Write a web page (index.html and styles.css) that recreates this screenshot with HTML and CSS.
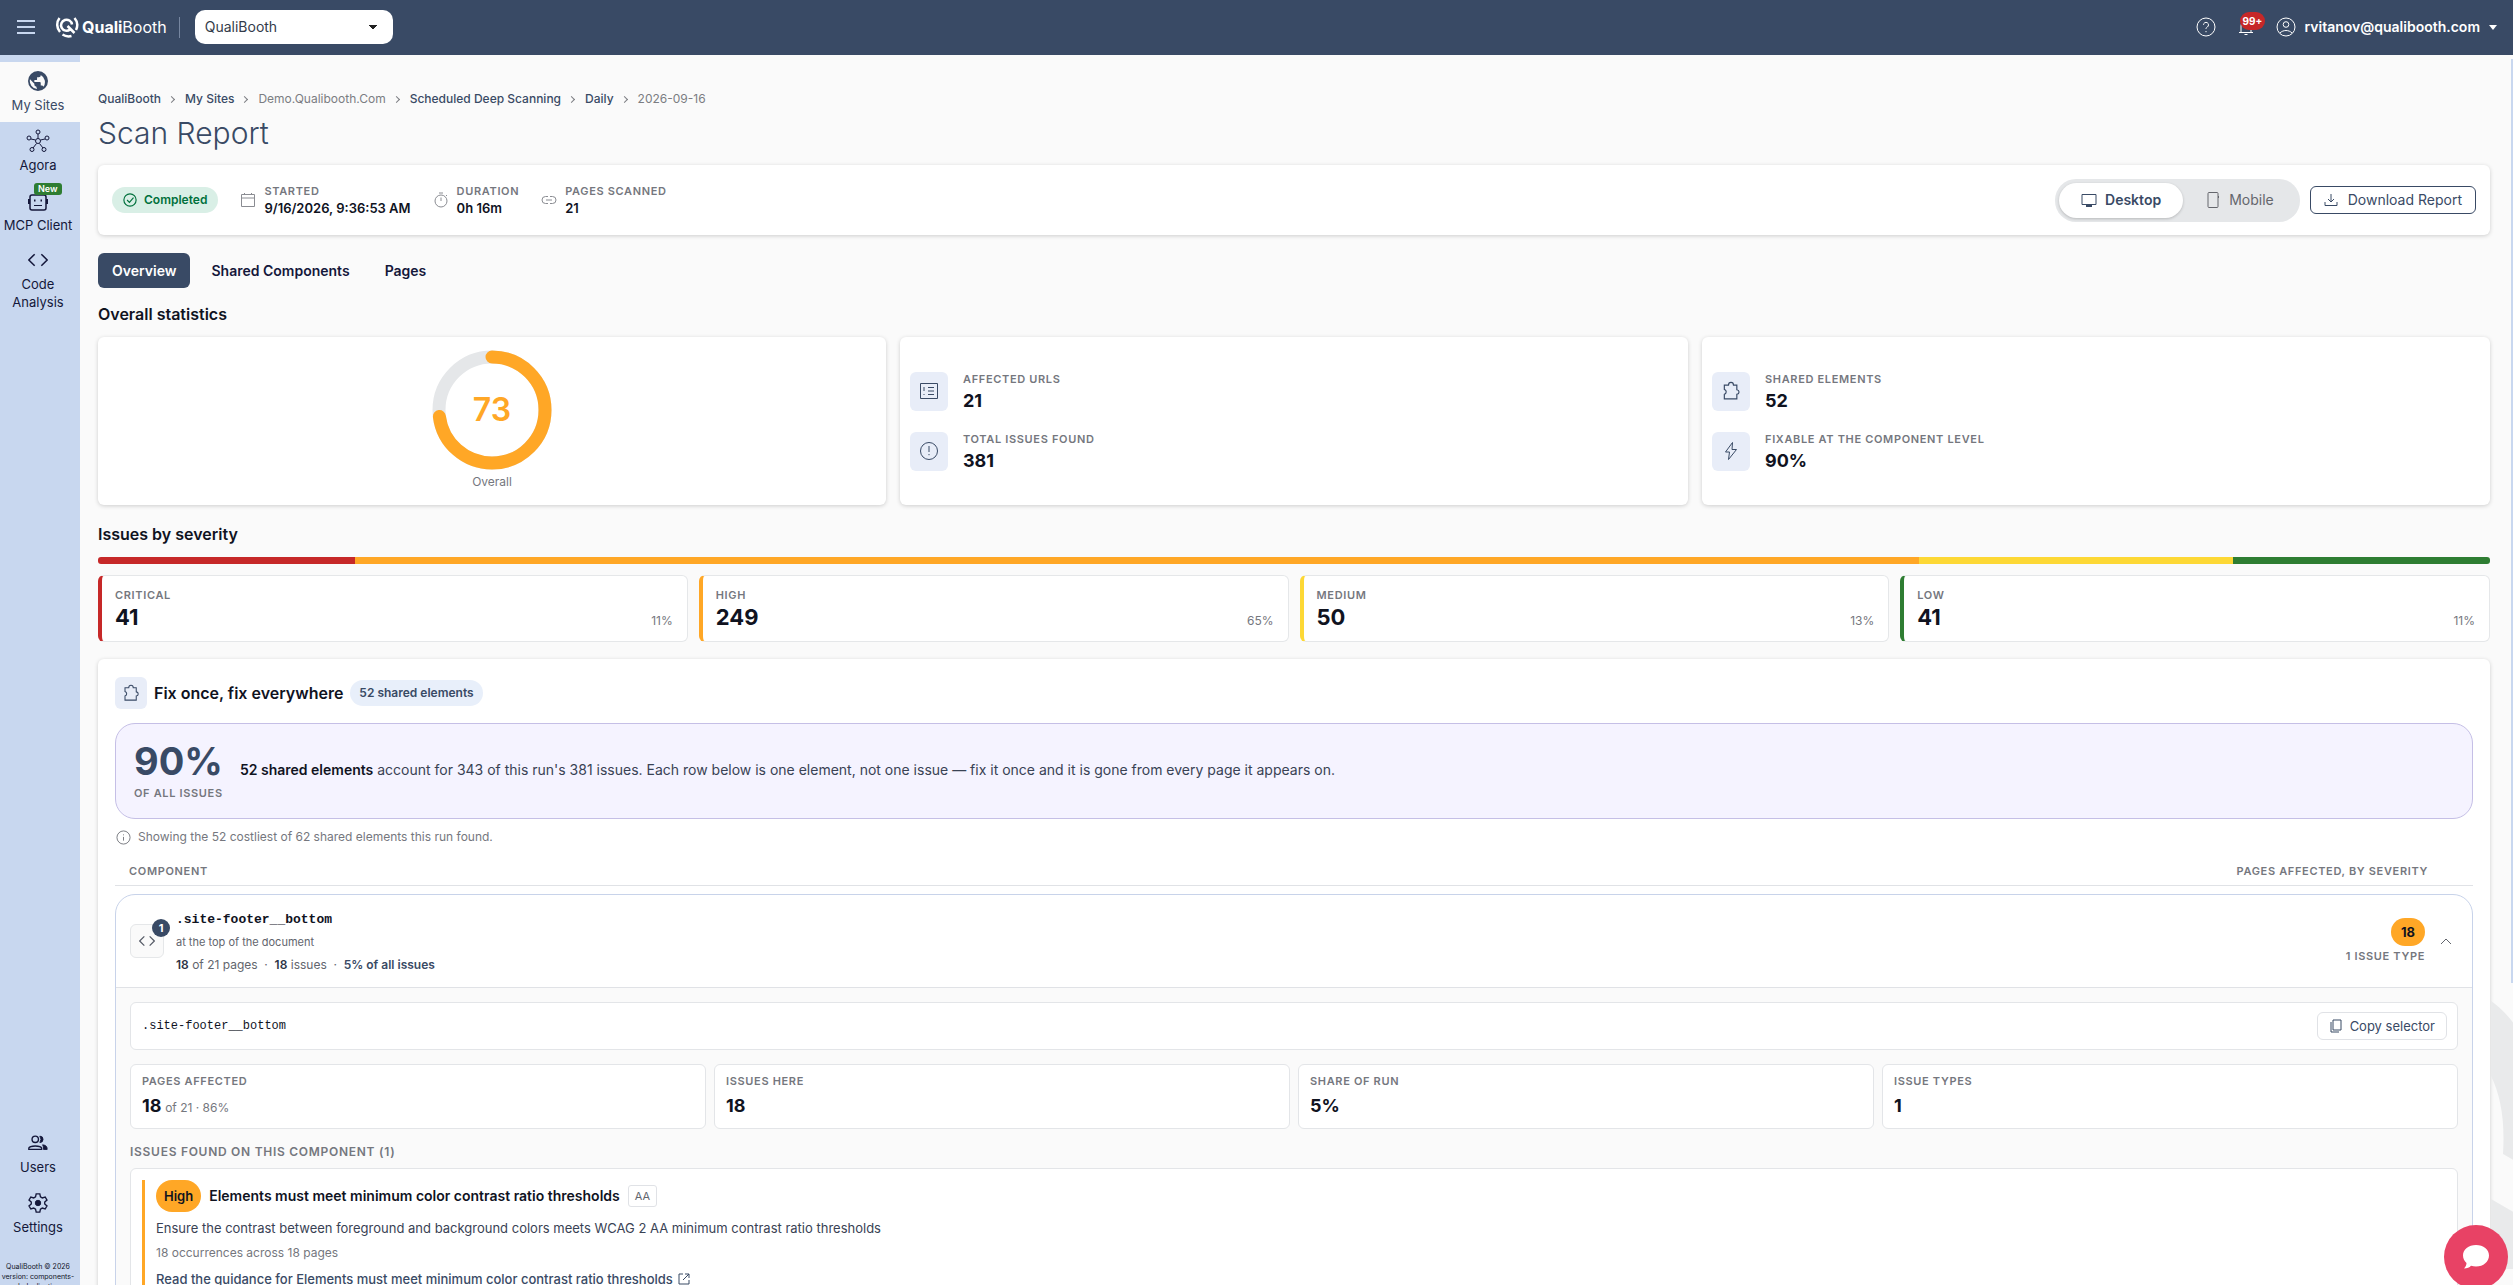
FILE: index.html
```
<!DOCTYPE html>
<html lang="en">
<head>
  <meta charset="UTF-8" />
  <meta name="viewport" content="width=device-width, initial-scale=1.0"/>
  <title>Scan Report - QualiBooth</title>
  <link rel="stylesheet" href="styles.css">
</head>
<body>

  <!-- shared icon shapes -->
  <svg class="sprite" aria-hidden="true">
    <symbol id="i-puzzle" viewBox="0 0 24 24"><path stroke-width="1.400" d="M4 5h5c0-4.500 6-4.500 6 0h4v5.500c3.500.5 3.500 5 0 5.500v5.500H4V16c3-1 3-5 0-6z"/></symbol>
    <symbol id="i-code" viewBox="0 0 24 24"><path stroke-width="1.800" d="M8 5l-7 7 7 7M16 5l7 7-7 7"/></symbol>
    <symbol id="i-info" viewBox="0 0 24 24"><circle cx="12" cy="12" r="10.500" stroke-width="1.500"/><path stroke-width="1.500" d="M12 11v6M12 7v1.500"/></symbol>
  </svg>

  <header class="topbar">
    <button class="menu-btn" aria-label="Menu"><svg width="18" height="14" viewBox="0 0 18 14"><path d="M0 1h18M0 7h18M0 13h18"/></svg></button>
    <a class="logo" href="#">
      <svg width="24" height="22" viewBox="0 0 24 22">
        <path d="M4.500 2A11 11 0 0 0 5 16M7.500 18.500a11 11 0 0 0 9 1.500M19.500 2a11 11 0 0 1 1.500 12"/>
        <path d="M15 13.500a5.500 5.500 0 1 1 2-5M12.500 10l7 7"/>
      </svg>
      <span><b>Quali</b>Booth</span>
    </a>
    <span class="divider"></span>
    <select class="org" aria-label="Organization"><option>QualiBooth</option></select>
    <div class="account">
      <button class="icon-btn" aria-label="Help"><svg width="20" height="20" viewBox="0 0 20 20"><circle cx="10" cy="10" r="9"/><path d="M7.500 7.800a2.500 2.500 0 1 1 3.800 2.200c-1 .6-1.300 1-1.300 2M10 14v1.200"/></svg></button>
      <button class="icon-btn bell" aria-label="Notifications"><svg width="20" height="20" viewBox="0 0 20 20"><path d="M3 15.500h14M5 15V9a5 5 0 0 1 10 0v6M8.500 17.500h3"/></svg><span class="count">99+</span></button>
      <button class="user">
        <svg width="20" height="20" viewBox="0 0 20 20"><circle cx="10" cy="10" r="9"/><circle cx="10" cy="7.500" r="2.800"/><path d="M4 16c3-3.300 9-3.300 12 0"/></svg>
        rvitanov@qualibooth.com
        <span class="caret"></span>
      </button>
    </div>
  </header>

  <div class="layout">
    <nav class="sidebar">
      <a class="active" href="#">
        <svg class="solid" width="20" height="20" viewBox="1 1 22 22"><path d="M12 1a11 11 0 1 0 0 22 11 11 0 0 0 0-22zm-1 19.900A9 9 0 0 1 3.200 10L8 15v1a2 2 0 0 0 2 2zm7-2.500a2 2 0 0 0-2-1.400h-1v-3a1 1 0 0 0-1-1H8v-2h2a1 1 0 0 0 1-1V8h2a2 2 0 0 0 2-2v-.6a9 9 0 0 1 3 13z"/></svg>
        My Sites
      </a>
      <a href="#">
        <svg width="24" height="24" viewBox="0 0 24 24"><circle cx="12" cy="12" r="2.500"/><circle cx="12" cy="3" r="2"/><circle cx="3" cy="9" r="2"/><circle cx="21" cy="9" r="2"/><circle cx="6" cy="20.500" r="2"/><circle cx="18" cy="20.500" r="2"/><path d="M12 5v4.500M5 10l4.500 1M19 10l-4.500 1M10.500 14.500L7 19M13.500 14.500L17 19"/></svg>
        Agora
      </a>
      <a href="#">
        <svg width="24" height="24" viewBox="0 0 24 24"><rect x="4" y="6" width="16" height="15" rx="2" stroke-width="1.500"/><path d="M8 16.500h8"/><path d="M3 10v5M21 10v5M8 11.500h1.500M14.500 11.500H16" stroke-width="2"/></svg>
        <span class="new">New</span>
        MCP Client
      </a>
      <a href="#">
        <svg width="20" height="24"><use href="#i-code"/></svg>
        <span>Code<br>Analysis</span>
      </a>
      <div class="sidebar-bottom">
        <a href="#">
          <svg width="22" height="20" viewBox="0 0 24 20"><circle cx="9" cy="6" r="3.500" stroke-width="1.500"/><path stroke-width="1.500" d="M2 17v-1.500c1-3 13-3 14 0V17z"/><path class="fill" d="M14 2.500a3.500 3.500 0 0 1 0 7 6 6 0 0 0 0-7zM17 12c4 .5 5 2 5 5h-4c0-2 0-3.500-1-5z"/></svg>
          Users
        </a>
        <a href="#">
          <svg width="20" height="20" viewBox="1 1 22 22"><path stroke-width="1.500" d="M10 2h4l.7 3.200 2 1.200 3.200-1 2 3.400-2.500 2.200v2l2.500 2.200-2 3.400-3.200-1-2 1.200L14 22h-4l-.7-3.200-2-1.200-3.200 1-2-3.400L4.600 13v-2L2.100 8.800l2-3.400 3.200 1 2-1.200z"/><circle class="fill" cx="12" cy="12" r="3"/></svg>
          Settings
        </a>
        <small>QualiBooth © 2026<br>version: components-<br>deduplication</small>
      </div>
    </nav>

    <main class="content">
      <svg class="watermark" width="24" height="290" viewBox="0 0 24 290"><path d="M0 6q12 8 24 24v136l-12-7q3-48-12-78zM0 204l24 14v56H0z"/></svg>
      <span class="scroll-thumb"></span>

      <nav class="breadcrumb">
        <a href="#">QualiBooth</a><i></i><a href="#">My Sites</a><i></i><span>Demo.Qualibooth.Com</span><i></i><a href="#">Scheduled Deep Scanning</a><i></i><a href="#">Daily</a><i></i><span>2026-09-16</span>
      </nav>
      <h1>Scan Report</h1>

      <section class="card run-bar">
        <span class="status"><svg width="14" height="14" viewBox="0 0 24 24"><circle cx="12" cy="12" r="10.500"/><path d="M7 12l4 4 7-8"/></svg>Completed</span>
        <div class="meta">
          <svg width="16" height="16" viewBox="0 0 16 16"><path d="M1.500 2.500h13v12h-13zM1.500 6h13M4.500 2.500V1M11.500 2.500V1"/></svg>
          <div><span class="label">Started</span><b>9/16/2026, 9:36:53 AM</b></div>
        </div>
        <div class="meta">
          <svg width="16" height="16" viewBox="0 0 16 16"><circle cx="8" cy="9" r="6"/><path d="M6 1h4M8 5.500V9M13 3l1 1"/></svg>
          <div><span class="label">Duration</span><b>0h 16m</b></div>
        </div>
        <div class="meta">
          <svg width="16" height="16" viewBox="0 0 16 16"><path d="M7 4.500H4.500a3.500 3.500 0 0 0 0 7H7M9 4.500h2.500a3.500 3.500 0 0 1 0 7H9M5 8h6"/></svg>
          <div><span class="label">Pages scanned</span><b>21</b></div>
        </div>
        <div class="device">
          <button class="on"><svg width="16" height="16" viewBox="0 0 16 16"><path d="M1 2.500h14v10H1z"/><path d="M5 14h6" stroke-width="2"/></svg>Desktop</button>
          <button><svg width="16" height="16" viewBox="0 0 16 16"><rect x="3" y="0.500" width="10" height="15" rx="1"/><path d="M13.500 4v2"/></svg>Mobile</button>
        </div>
        <button class="download"><svg width="14" height="14" viewBox="0 0 14 14"><path d="M7 1v8M4 6l3 3 3-3M1 9v3.500h12V9"/></svg>Download Report</button>
      </section>

      <div class="tabs" role="tablist">
        <button class="on" role="tab">Overview</button>
        <button role="tab">Shared Components</button>
        <button role="tab">Pages</button>
      </div>

      <h2>Overall statistics</h2>
      <section class="stats">
        <div class="card gauge">
          <div class="ring">
            <svg width="120" height="120" viewBox="0 0 120 120">
              <circle class="track" cx="60" cy="60" r="53"/>
              <circle class="value" cx="60" cy="60" r="53" pathLength="100" stroke-dasharray="73 100" transform="rotate(-90 60 60)"/>
            </svg>
            <strong>73</strong>
          </div>
          <span>Overall</span>
        </div>
        <div class="card facts">
          <div class="fact">
            <span class="tile"><svg width="20" height="20" viewBox="0 0 20 20"><path d="M1.500 2.500h17v15h-17zM5 6v4M5 13v1M9 6.500h6M9 10h6M9 13.500h6"/></svg></span>
            <div><span class="label">Affected URLs</span><b>21</b></div>
          </div>
          <div class="fact">
            <span class="tile"><svg width="20" height="20" viewBox="0 0 20 20"><circle cx="10" cy="10" r="8.500"/><path d="M10 5v6M10 13v1.200"/></svg></span>
            <div><span class="label">Total issues found</span><b>381</b></div>
          </div>
        </div>
        <div class="card facts">
          <div class="fact">
            <span class="tile"><svg width="20" height="20"><use href="#i-puzzle"/></svg></span>
            <div><span class="label">Shared elements</span><b>52</b></div>
          </div>
          <div class="fact">
            <span class="tile"><svg width="20" height="20" viewBox="0 0 20 20"><path d="M11.500 1.500L4.500 11h4L7.500 18.500l8-10H11z"/></svg></span>
            <div><span class="label">Fixable at the component level</span><b>90%</b></div>
          </div>
        </div>
      </section>

      <h2>Issues by severity</h2>
      <div class="sev-bar">
        <span class="critical" style="flex-grow:41"></span>
        <span class="high" style="flex-grow:249"></span>
        <span class="medium" style="flex-grow:50"></span>
        <span class="low" style="flex-grow:41"></span>
      </div>
      <section class="sev-cards">
        <div class="critical"><div><span class="label">Critical</span><b>41</b></div><span>11%</span></div>
        <div class="high"><div><span class="label">High</span><b>249</b></div><span>65%</span></div>
        <div class="medium"><div><span class="label">Medium</span><b>50</b></div><span>13%</span></div>
        <div class="low"><div><span class="label">Low</span><b>41</b></div><span>11%</span></div>
      </section>

      <section class="card fix">
        <div class="fix-title">
          <span class="tile small"><svg width="18" height="18"><use href="#i-puzzle"/></svg></span>
          <h2>Fix once, fix everywhere</h2>
          <span class="chip">52 shared elements</span>
        </div>

        <div class="banner">
          <div><strong>90%</strong><span class="label">Of all issues</span></div>
          <p><b>52 shared elements</b> account for 343 of this run's 381 issues. Each row below is one element, not one issue — fix it once and it is gone from every page it appears on.</p>
        </div>

        <p class="note"><svg width="15" height="15"><use href="#i-info"/></svg>Showing the 52 costliest of 62 shared elements this run found.</p>

        <div class="list-head"><span class="label">Component</span><span class="label">Pages affected, by severity</span></div>

        <article class="component">
          <div class="component-head">
            <span class="rank"><svg width="16" height="16"><use href="#i-code"/></svg><em>1</em></span>
            <div class="component-name">
              <code>.site-footer__bottom</code>
              <small>at the top of the document</small>
              <p><b>18</b> of 21 pages &nbsp;·&nbsp; <b>18</b> issues &nbsp;·&nbsp; <b class="share">5% of all issues</b></p>
            </div>
            <div class="component-count"><span class="badge">18</span><span class="label">1 issue type</span></div>
            <button class="toggle" aria-label="Collapse"><svg width="12" height="12" viewBox="0 0 12 12"><path d="M1 9l5-5 5 5"/></svg></button>
          </div>

          <div class="component-body">
            <div class="box selector">
              <code>.site-footer__bottom</code>
              <button><svg width="14" height="14" viewBox="0 0 14 14"><path d="M4 1h8v10H4zM2 3v10h8"/></svg>Copy selector</button>
            </div>
            <div class="mini-stats">
              <div class="box"><span class="label">Pages affected</span><b>18</b> <small>of 21 · 86%</small></div>
              <div class="box"><span class="label">Issues here</span><b>18</b></div>
              <div class="box"><span class="label">Share of run</span><b>5%</b></div>
              <div class="box"><span class="label">Issue types</span><b>1</b></div>
            </div>
            <h3>Issues found on this component (1)</h3>
            <div class="box issues">
              <div class="issue">
                <div class="issue-title"><span class="badge">High</span><h4>Elements must meet minimum color contrast ratio thresholds</h4><span class="level">AA</span></div>
                <p>Ensure the contrast between foreground and background colors meets WCAG 2 AA minimum contrast ratio thresholds</p>
                <small>18 occurrences across 18 pages</small>
                <a href="#">Read the guidance for Elements must meet minimum color contrast ratio thresholds <svg width="12" height="12" viewBox="0 0 12 12"><path d="M5 1H1v10h10V7M7 1h4v4M11 1L5 7"/></svg></a>
              </div>
            </div>
          </div>
        </article>
      </section>
    </main>
  </div>

  <button class="chat" aria-label="Open chat"><svg width="28" height="26" viewBox="0 0 28 26"><path d="M14 1C6.500 1 1 5.500 1 11.500c0 3 1.500 5.500 3.500 7.500 0 2-1 4-2.500 5.500 3 0 5.500-1 7-2.800 1.600.5 3.300.8 5 .8 7.500 0 13-4.800 13-11S21.500 1 14 1z"/></svg></button>

</body>
</html>
```
FILE: styles.css
```
* {
  box-sizing: border-box;
}
body {
  margin: 0;
  height: 100vh;
  overflow: hidden;
  display: flex;
  flex-direction: column;
  font-family: Inter, "Open Sans", sans-serif;
  font-size: 13px;
  line-height: 18px;
  color: #10131f;
  background: #fafafa;
}
button, select {
  font: inherit;
  color: inherit;
  background: none;
  border: 0;
  padding: 0;
  cursor: pointer;
}
a {
  color: #394a65;
  text-decoration: none;
}
h1, h2, h3, h4, p {
  margin: 0;
}
b, strong {
  font-weight: 600;
}
code {
  font-family: "Liberation Mono", monospace;
}
svg {
  fill: none;
  stroke: currentColor;
  flex-shrink: 0;
}
.sprite {
  display: none;
}
.fill {
  fill: currentColor;
}

/* top bar */
.topbar {
  flex: none;
  display: flex;
  align-items: center;
  height: 55px;
  padding: 0 16px 1px 17px;
  color: #fff;
  background: #394a65;
}
.menu-btn {
  display: flex;
  margin-right: 20px;
  color: #c8d7ef;
}
.menu-btn svg {
  stroke-width: 2;
}
.logo {
  display: flex;
  align-items: center;
  gap: 3px;
  font-size: 16px;
  color: #fff;
}
.logo svg {
  stroke-width: 2.500;
}
.logo b {
  font-weight: 700;
}
.divider {
  width: 1px;
  height: 21px;
  margin: 0 15px 0 12px;
  background: #7686a0;
}
.org {
  appearance: none;
  width: 198px;
  height: 34px;
  padding: 0 10px;
  font-size: 14px;
  color: #333b4a;
  border-radius: 10px;
  background: linear-gradient(to top right, transparent 50%, #222 50%) 174px 15px / 4px 5px no-repeat, linear-gradient(to top left, transparent 50%, #222 50%) 178px 15px / 4px 5px no-repeat, #fff;
}
.account {
  display: flex;
  align-items: center;
  gap: 20px;
  margin-left: auto;
}
.icon-btn {
  display: flex;
  position: relative;
}
.count {
  position: absolute;
  top: -5px;
  left: 4px;
  padding: 0 3px;
  font-size: 10px;
  font-weight: 700;
  border-radius: 9px;
  background: #c62828;
}
.user {
  display: flex;
  align-items: center;
  gap: 9px;
  font-size: 14px;
  font-weight: 600;
}
.caret {
  border: 4px solid transparent;
  border-top: 5px solid #fff;
  border-bottom: 0;
}

/* side bar */
.layout {
  flex: 1;
  display: flex;
  min-height: 0;
}
.sidebar {
  display: flex;
  flex-direction: column;
  width: 80px;
  padding-top: 7px;
  text-align: center;
  background: #c8d7ef;
}
.sidebar a {
  position: relative;
  display: flex;
  flex-direction: column;
  align-items: center;
  justify-content: center;
  gap: 3px;
  min-height: 60px;
  padding: 6px 4px 8px 0;
  color: #14173a;
}
.sidebar svg {
  height: 24px;
}
.sidebar .active {
  color: #394a65;
  background: #fafafa;
}
.solid {
  fill: currentColor;
  stroke: none;
}
.new {
  position: absolute;
  top: 1px;
  left: 34px;
  padding: 0 4px;
  font-size: 9px;
  line-height: 12px;
  font-weight: 600;
  color: #fff;
  border-radius: 3px;
  background: #2e7d32;
}
.sidebar-bottom {
  margin-top: auto;
}
.sidebar-bottom small {
  display: block;
  height: 23px;
  margin-top: 18px;
  padding-right: 4px;
  overflow: hidden;
  font-size: 7px;
  line-height: 10px;
}

/* page */
.content {
  position: relative;
  flex: 1;
  min-width: 0;
  padding: 35px 23px 0 18px;
  overflow: hidden;
}
.watermark {
  position: absolute;
  right: -2px;
  bottom: 0;
  fill: #e9eaeb;
  stroke: none;
}
.scroll-thumb {
  position: absolute;
  top: 4px;
  right: 0;
  width: 2px;
  height: 924px;
  background: #c8d7ef;
}
.breadcrumb {
  display: flex;
  align-items: center;
  gap: 8px;
  font-size: 12px;
  font-weight: 500;
  color: #7b7d82;
}
.breadcrumb span {
  font-weight: 400;
}
.breadcrumb i {
  width: 5px;
  height: 5px;
  margin-right: 3px;
  border: solid #7b7d82;
  border-width: 1px 1px 0 0;
  transform: rotate(45deg);
}
h1 {
  margin: 6px 0 13px;
  font-size: 30px;
  line-height: 38px;
  font-weight: 300;
  color: #394a65;
}
h2 {
  font-size: 16px;
  line-height: 20px;
  font-weight: 600;
}
.card {
  border-radius: 6px;
  background: #fff;
  box-shadow: 0 1px 4px rgba(0, 0, 0, 0.18);
}
.label {
  display: block;
  font-size: 11px;
  line-height: 16px;
  font-weight: 600;
  letter-spacing: 0.06em;
  text-transform: uppercase;
  color: #75777e;
}
.run-bar {
  display: flex;
  align-items: center;
  gap: 22px;
  height: 70px;
  padding: 0 14px;
}
.status {
  display: flex;
  align-items: center;
  gap: 7px;
  padding: 4px 11px;
  font-size: 12px;
  font-weight: 600;
  color: #00703c;
  border-radius: 13px;
  background: #d9efe6;
}
.status svg {
  stroke-width: 2;
}
.meta {
  display: flex;
  align-items: center;
  gap: 8px;
}
.meta svg {
  color: #8a8c92;
}
.meta b {
  display: block;
}
.device {
  display: flex;
  margin: 0 -12px 0 auto;
  padding: 4px;
  border-radius: 21px;
  background: #e5e7e9;
}
.device button {
  display: flex;
  align-items: center;
  gap: 8px;
  height: 35px;
  padding: 0 22px;
  font-size: 14px;
  color: #64666c;
  border-radius: 18px;
}
.device .on {
  font-weight: 600;
  color: #394a65;
  background: #fff;
  box-shadow: 0 1px 3px rgba(0, 0, 0, 0.2);
}
.download {
  display: flex;
  align-items: center;
  gap: 10px;
  height: 28px;
  padding: 0 13px;
  font-size: 14px;
  color: #394a65;
  border: 1px solid #394a65;
  border-radius: 6px;
}
.tabs {
  display: flex;
  gap: 7px;
  margin: 18px 0 16px;
}
.tabs button {
  height: 35px;
  padding: 0 14px;
  font-size: 14px;
  font-weight: 600;
  color: #14173a;
  border-radius: 6px;
}
.tabs .on {
  color: #fff;
  background: #394a65;
}

/* statistics */
.stats {
  display: grid;
  grid-template-columns: repeat(3, 1fr);
  gap: 14px;
  margin: 13px 0 19px;
}
.stats .card {
  height: 168px;
}
.gauge {
  display: flex;
  flex-direction: column;
  align-items: center;
  padding-top: 13px;
  gap: 3px;
  font-size: 12px;
  color: #75777e;
}
.ring {
  display: grid;
  place-items: center;
  height: 120px;
}
.ring > * {
  grid-area: 1 / 1;
}
.ring circle {
  stroke-width: 13;
  stroke-linecap: round;
}
.ring strong {
  font-size: 32px;
  color: #ffa726;
}
.track {
  stroke: #e5e7e9;
}
.value {
  stroke: #ffa726;
}
.facts {
  display: flex;
  flex-direction: column;
  justify-content: center;
  gap: 20px;
  padding: 0 10px;
}
.fact {
  display: flex;
  align-items: center;
  gap: 15px;
}
.fact b {
  display: block;
  margin-top: 4px;
  font-size: 18px;
  line-height: 20px;
  font-weight: 700;
}
.tile {
  display: grid;
  place-items: center;
  width: 38px;
  height: 39px;
  color: #394a65;
  border-radius: 6px;
  background: #e8edf8;
}
.tile.small {
  width: 32px;
  height: 32px;
}

/* severity */
.sev-bar {
  display: flex;
  height: 7px;
  margin: 13px 0 11px;
  overflow: hidden;
  border-radius: 3px;
}
.sev-bar .critical { background: #c62828; }
.sev-bar .high { background: #ffa726; }
.sev-bar .medium { background: #fdd835; }
.sev-bar .low { background: #2e7d32; }
.sev-cards {
  display: grid;
  grid-template-columns: repeat(4, 1fr);
  gap: 11px;
  margin-bottom: 17px;
}
.sev-cards > div {
  display: flex;
  justify-content: space-between;
  align-items: flex-end;
  height: 67px;
  padding: 0 14px 11px 13px;
  font-size: 12px;
  color: #75777e;
  border: 1px solid #e5e7e9;
  border-left-width: 4px;
  border-radius: 6px;
  background: #fff;
}
.sev-cards .critical { border-left-color: #c62828; }
.sev-cards .high { border-left-color: #ffa726; }
.sev-cards .medium { border-left-color: #fdd835; }
.sev-cards .low { border-left-color: #2e7d32; }
.sev-cards b {
  display: block;
  margin-top: 2px;
  margin-bottom: 1px;
  font-size: 22px;
  line-height: 24px;
  font-weight: 700;
  color: #10131f;
}

/* shared elements */
.fix {
  padding: 18px 17px 0;
}
.fix-title {
  display: flex;
  align-items: center;
  gap: 7px;
}
.chip {
  padding: 4px 9px;
  font-size: 12px;
  font-weight: 600;
  color: #394a65;
  border-radius: 13px;
  background: #e8effa;
}
.banner {
  display: flex;
  align-items: center;
  gap: 17px;
  height: 96px;
  margin: 14px 0 9px;
  padding: 0 18px 2px;
  font-size: 14px;
  color: #394254;
  border: 1px solid #c5bfe6;
  border-radius: 20px;
  background: #f5f3ff;
}
.banner strong {
  display: block;
  margin-bottom: 2px;
  font-size: 38px;
  line-height: 44px;
  font-weight: 700;
  color: #394a65;
}
.banner b {
  color: #10131f;
}
.note {
  display: flex;
  align-items: center;
  gap: 7px;
  padding-left: 1px;
  font-size: 12px;
  color: #75777e;
}
.list-head {
  display: flex;
  justify-content: space-between;
  margin-bottom: 8px;
  padding: 17px 45px 6px 14px;
  border-bottom: 1px solid #e0e2e6;
}
.component {
  border: 1px solid #c8d3ea;
  border-radius: 20px 20px 0 0;
}
.component-head {
  display: flex;
  align-items: center;
  height: 92px;
  padding: 0 20px 0 14px;
}
.rank {
  position: relative;
  display: grid;
  place-items: center;
  width: 34px;
  height: 34px;
  margin-right: 12px;
  color: #555a66;
  border: 1px solid #e5e7e9;
  border-radius: 6px;
  background: #fafafa;
}
.rank em {
  position: absolute;
  top: -6px;
  right: -7px;
  width: 18px;
  font-size: 11px;
  font-style: normal;
  font-weight: 700;
  text-align: center;
  color: #fff;
  border-radius: 9px;
  background: #394a65;
}
.component-name {
  flex: 1;
  padding-top: 3px;
  color: #62656d;
}
.component-name code {
  display: block;
  line-height: 22px;
  font-weight: 700;
  color: #10131f;
}
.component-name small {
  display: block;
  font-size: 11px;
  line-height: 22px;
}
.component-name p {
  font-size: 12px;
  line-height: 24px;
}
.component-name b {
  color: #2d3547;
}
.component-name .share {
  color: #394a65;
}
.component-count {
  display: flex;
  flex-direction: column;
  align-items: flex-end;
  gap: 2px;
  margin-right: 15px;
}
.badge {
  padding: 5px 10px;
  font-weight: 700;
  color: #10131f;
  border-radius: 14px;
  background: #ffa726;
}
.toggle {
  display: flex;
  color: #62656d;
}
.component-body {
  padding: 14px;
  border-top: 1px solid #e0e2e6;
  background: #fafafa;
}
.box {
  border: 1px solid #e3e5e8;
  border-radius: 6px;
  background: #fff;
}
.selector {
  display: flex;
  align-items: center;
  justify-content: space-between;
  height: 48px;
  padding: 0 10px 0 11px;
  font-size: 12px;
}
.selector button {
  display: flex;
  align-items: center;
  gap: 7px;
  height: 28px;
  padding: 0 11px;
  font-size: 13px;
  color: #394a65;
  border: 1px solid #e0e2e6;
  border-radius: 6px;
}
.mini-stats {
  display: grid;
  grid-template-columns: repeat(4, 1fr);
  gap: 8px;
  margin: 14px 0;
}
.mini-stats .box {
  height: 65px;
  padding: 8px 11px;
}
.mini-stats b {
  font-size: 18px;
  line-height: 34px;
  font-weight: 700;
}
.mini-stats small {
  font-size: 12px;
  color: #75777e;
}
h3 {
  margin-bottom: 7px;
  font-size: 12px;
  line-height: 18px;
  font-weight: 600;
  letter-spacing: 0.06em;
  text-transform: uppercase;
  color: #75777e;
}
.issues {
  padding: 11px;
}
.issue {
  padding-left: 11px;
  border-left: 3px solid #ffa726;
}
.issue > * {
  display: block;
}
.issue .issue-title {
  display: flex;
  align-items: center;
  gap: 8px;
}
.issue .badge {
  padding: 7px 8px;
  border-radius: 16px;
  font-weight: 600;
}
h4 {
  font-size: 14px;
  font-weight: 600;
}
.level {
  padding: 1px 6px;
  font-size: 11px;
  color: #62656d;
  border: 1px solid #e0e2e6;
  border-radius: 3px;
}
.issue p {
  line-height: 32px;
  color: #394254;
}
.issue small {
  font-size: 12px;
  line-height: 18px;
  color: #75777e;
}
.issue a {
  line-height: 34px;
  font-weight: 500;
}
.issue a svg {
  margin-left: 2px;
  vertical-align: -1px;
}

.chat {
  position: fixed;
  right: 5px;
  bottom: -4px;
  display: grid;
  place-items: center;
  width: 64px;
  height: 64px;
  border-radius: 50%;
  background: #e84265;
}
.chat svg {
  fill: #fff;
  stroke: none;
}
```
